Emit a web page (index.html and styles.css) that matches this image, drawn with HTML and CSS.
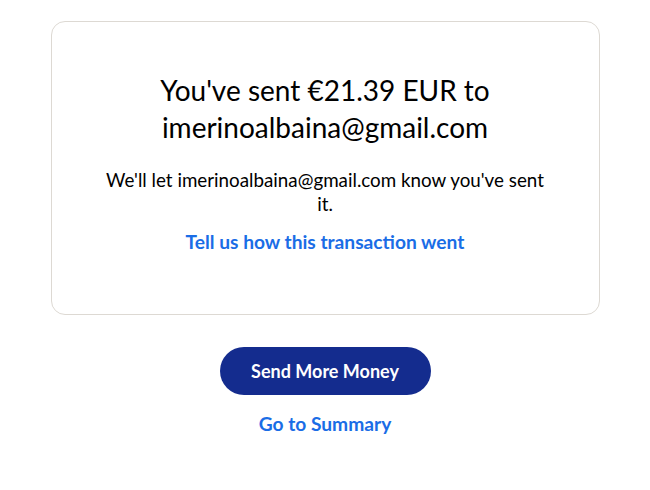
FILE: index.html
```html
<!DOCTYPE html>
<html>
<head>
<meta charset="utf-8">
<link rel="stylesheet" href="styles.css">
</head>
<body>
<main class="page">
  <section class="card">
    <h1 class="title">You've sent €21.39 EUR to imerinoalbaina@gmail.com</h1>
    <p class="note">We'll let imerinoalbaina@gmail.com know you've sent it.</p>
    <a class="link feedback" href="#">Tell us how this transaction went</a>
  </section>
  <div class="actions">
    <a class="btn" href="#">Send More Money</a>
    <a class="link summary" href="#">Go to Summary</a>
  </div>
</main>
</body>
</html>
```
FILE: styles.css
```css
html, body {
  margin: 0;
  padding: 0;
  background: #fff;
}
body {
  font-family: "Lato", "Noto Sans", sans-serif;
  color: #000;
}
.page {
  width: 549px;
  margin: 0 auto;
  padding-top: 21px;
}
.card {
  box-sizing: border-box;
  height: 294px;
  border: 1px solid #ddd9d3;
  border-radius: 14px;
  display: flex;
  flex-direction: column;
  align-items: center;
  padding: 50px 40px 0;
  text-align: center;
}
.title {
  margin: 0;
  font-size: 28px;
  font-weight: 400;
  line-height: 37px;
  width: 380px;
}
.note {
  margin: 22px 0 0;
  font-size: 18.8px;
  line-height: 24px;
  width: 445px;
}
.link {
  color: #1a6de6;
  font-weight: 700;
  text-decoration: none;
  font-size: 19.2px;
}
.feedback {
  margin-top: 14px;
}
.actions {
  display: flex;
  flex-direction: column;
  align-items: center;
  margin-top: 32px;
}
.btn {
  display: flex;
  align-items: center;
  justify-content: center;
  width: 211px;
  height: 48px;
  border-radius: 24px;
  background: #142c8e;
  color: #fff;
  font-weight: 700;
  font-size: 18px;
  text-decoration: none;
}
.summary {
  margin-top: 17px;
}
```
